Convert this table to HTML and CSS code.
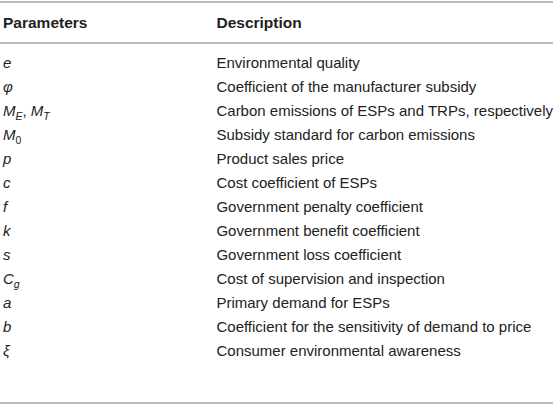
FILE: index.html
```html
<!DOCTYPE html>
<html>
<head>
<meta charset="utf-8">
<link rel="stylesheet" href="styles.css">
</head>
<body>
<table class="params">
  <thead>
    <tr><th>Parameters</th><th>Description</th></tr>
  </thead>
  <tbody>
    <tr><td><i>e</i></td><td>Environmental quality</td></tr>
    <tr><td><i>φ</i></td><td>Coefficient of the manufacturer subsidy</td></tr>
    <tr><td><i>M<sub>E</sub></i>, <i>M<sub>T</sub></i></td><td>Carbon emissions of ESPs and TRPs, respectively</td></tr>
    <tr><td><i>M</i><sub>0</sub></td><td>Subsidy standard for carbon emissions</td></tr>
    <tr><td><i>p</i></td><td>Product sales price</td></tr>
    <tr><td><i>c</i></td><td>Cost coefficient of ESPs</td></tr>
    <tr><td><i>f</i></td><td>Government penalty coefficient</td></tr>
    <tr><td><i>k</i></td><td>Government benefit coefficient</td></tr>
    <tr><td><i>s</i></td><td>Government loss coefficient</td></tr>
    <tr><td><i>C<sub>g</sub></i></td><td>Cost of supervision and inspection</td></tr>
    <tr><td><i>a</i></td><td>Primary demand for ESPs</td></tr>
    <tr><td><i>b</i></td><td>Coefficient for the sensitivity of demand to price</td></tr>
    <tr class="last"><td><i>ξ</i></td><td>Consumer environmental awareness</td></tr>
  </tbody>
</table>
</body>
</html>
```
FILE: styles.css
```css
html, body {
  margin: 0;
  padding: 0;
  background: #fff;
}
body {
  font-family: "Liberation Sans", Arial, sans-serif;
  font-size: 15px;
  color: #222;
}
.params {
  width: 553px;
  border-collapse: collapse;
  margin-top: 1px;
}
.params thead tr {
  border-top: 2px solid #bdbdbd;
  border-bottom: 2px solid #bdbdbd;
}
.params th {
  text-align: left;
  font-weight: bold;
  font-size: 15.5px;
  height: 39px;
  padding: 0 0 0 3px;
  vertical-align: middle;
}
.params th + th, .params td + td {
  padding-left: 0;
  width: 336px;
}
.params td {
  height: 24px;
  padding: 0 0 0 3px;
  vertical-align: middle;
  white-space: nowrap;
}
.params tbody tr:first-child td {
  padding-top: 6px;
}
.params tbody tr.last {
  border-bottom: 2px solid #bdbdbd;
}
.params tbody tr.last td {
  padding-bottom: 40px;
}
.params sub {
  font-size: 10.5px;
  line-height: 0;
}
```
